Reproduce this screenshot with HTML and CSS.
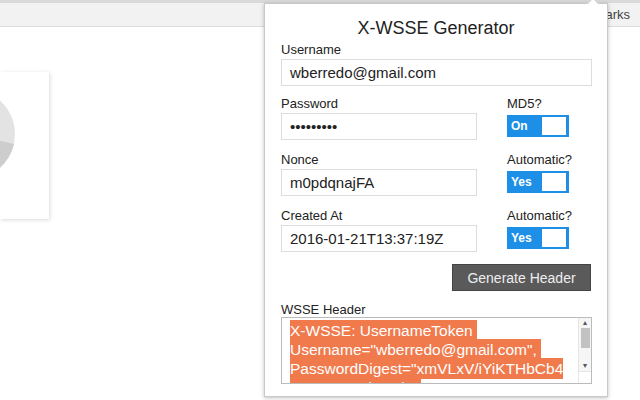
FILE: index.html
```html
<!DOCTYPE html>
<html lang="en">
<head>
    <meta charset="UTF-8">
    <meta name="viewport" content="width=device-width, initial-scale=1.0">
    <title>X-WSSE Generator</title>
    <link rel="stylesheet" href="styles.css">
</head>
<body>
    <div class="toolbar">
        <div class="toolbar_top"></div>
        <div class="toolbar_bar">
            <span class="bookmarks">Bookmarks</span>
        </div>
    </div>
    <div class="pagina">
        <div class="cartao">
            <svg class="pizza" width="49" height="147" viewBox="0 0 49 147">
                <circle cx="-30" cy="62" r="45" fill="#e3e3e3"/>
                <path d="M-30 62 L14 72 A45 45 0 0 1 -30 107 Z" fill="#cdcdcd"/>
            </svg>
        </div>
    </div>

    <div class="popup">
        <div class="popup_seta"></div>
        <h1 class="titulo">X-WSSE Generator</h1>

        <div class="campo">
            <label class="rotulo">Username</label>
            <div class="entrada entrada_larga">wberredo@gmail.com</div>
        </div>

        <div class="linha">
            <div class="campo campo_esq">
                <label class="rotulo">Password</label>
                <div class="entrada senha">&bull;&bull;&bull;&bull;&bull;&bull;&bull;&bull;&bull;</div>
            </div>
            <div class="campo campo_dir">
                <label class="rotulo">MD5?</label>
                <div class="chave"><span>On</span><div class="chave_bola"></div></div>
            </div>
        </div>

        <div class="linha">
            <div class="campo campo_esq">
                <label class="rotulo">Nonce</label>
                <div class="entrada">m0pdqnajFA</div>
            </div>
            <div class="campo campo_dir">
                <label class="rotulo">Automatic?</label>
                <div class="chave"><span>Yes</span><div class="chave_bola"></div></div>
            </div>
        </div>

        <div class="linha">
            <div class="campo campo_esq">
                <label class="rotulo">Created At</label>
                <div class="entrada">2016-01-21T13:37:19Z</div>
            </div>
            <div class="campo campo_dir">
                <label class="rotulo">Automatic?</label>
                <div class="chave"><span>Yes</span><div class="chave_bola"></div></div>
            </div>
        </div>

        <div class="acoes">
            <button class="botao">Generate Header</button>
        </div>

        <div class="campo campo_header">
            <label class="rotulo">WSSE Header</label>
            <div class="area">
                <div class="area_texto">
                    <span class="sel">X-WSSE: UsernameToken&nbsp;</span><br>
                    <span class="sel">Username="wberredo@gmail.com",&nbsp;</span><br>
                    <span class="sel">PasswordDigest="xmVLxV/iYiKTHbCb4</span><br>
                    <span class="sel">ZOUHLnGdTWdw"</span>
                </div>
                <div class="rolagem">
                    <div class="rolagem_seta">&#9652;</div>
                    <div class="rolagem_barra"></div>
                    <div class="rolagem_vazio"></div>
                    <div class="rolagem_seta">&#9662;</div>
                    <div class="rolagem_canto"></div>
                </div>
            </div>
        </div>
    </div>
</body>
</html>
```

FILE: styles.css
```css
*{
    padding: 0px;
    margin: 0px;
    box-sizing: border-box;
}
body{
    width: 640px;
    height: 400px;
    overflow: hidden;
    background-color: #fff;
    font-family: "Liberation Sans", Arial, sans-serif;
    position: relative;
}
.toolbar_top{
    height: 3px;
    background-color: #d9d9d9;
}
.toolbar_bar{
    height: 24px;
    background-color: #f2f2f2;
    border-bottom: 1px solid #dcdcdc;
    display: flex;
    justify-content: flex-end;
    align-items: center;
    overflow: hidden;
}
.bookmarks{
    font-size: 13px;
    color: #444;
    margin-right: 10px;
}
.pagina{
    padding-top: 45px;
}
.cartao{
    width: 49px;
    height: 147px;
    background-color: #fff;
    box-shadow: 1px 1px 4px rgba(0,0,0,0.15);
}
.pizza{
    display: block;
}
.popup{
    position: absolute;
    left: 264px;
    top: 3px;
    width: 344px;
    height: 394px;
    background-color: #fff;
    border: 1px solid #c8c8c8;
    box-shadow: 0px 1px 4px rgba(0,0,0,0.25);
    padding: 0px 16px 0px 16px;
}
.popup_seta{
    position: absolute;
    top: -5px;
    left: 324px;
    width: 8px;
    height: 8px;
    background-color: #fff;
    border-left: 1px solid #c8c8c8;
    border-top: 1px solid #c8c8c8;
    transform: rotate(45deg);
}
.titulo{
    text-align: center;
    font-weight: normal;
    font-size: 18px;
    color: #222;
    margin-top: 14px;
    height: 20px;
}
.campo{
    display: flex;
    flex-direction: column;
}
.rotulo{
    font-size: 13px;
    color: #222;
    height: 17px;
    margin-top: 4px;
}
.entrada{
    height: 27px;
    border: 1px solid #ddd;
    font-size: 15px;
    color: #222;
    padding: 4px 8px;
    line-height: 17px;
}
.entrada_larga{
    width: 311px;
}
.senha{
    font-size: 15px;
}
.linha{
    display: flex;
    margin-top: 6px;
}
.linha + .linha{
    margin-top: 8px;
}
.campo_esq{
    width: 196px;
}
.campo_dir{
    margin-left: 30px;
}
.chave{
    display: flex;
    align-items: center;
    justify-content: space-between;
    width: 62px;
    height: 22px;
    margin-top: 2px;
    background-color: #1e8fe6;
    padding: 2px 3px 2px 4px;
}
.chave span{
    color: #fff;
    font-weight: bold;
    font-size: 12px;
}
.chave_bola{
    width: 24px;
    height: 18px;
    background-color: #fff;
}
.acoes{
    display: flex;
    justify-content: flex-end;
    margin-top: 12px;
}
.botao{
    width: 139px;
    height: 27px;
    background-color: #5a5a5a;
    color: #eee;
    border: 1px solid #444;
    font-family: "Liberation Sans", Arial, sans-serif;
    font-size: 14px;
}
.campo_header{
    margin-top: 7px;
}
.campo_header .rotulo{
    height: 15px;
}
.area{
    width: 311px;
    height: 67px;
    border: 1px solid #bbb;
    display: flex;
    overflow: hidden;
}
.area_texto{
    flex: 1;
    padding: 3px 0px 0px 8px;
    font-size: 15.5px;
    line-height: 19px;
    color: #fff;
}
.sel{
    background-color: #f07a4c;
    padding: 2px 0px;
}
.rolagem{
    width: 13px;
    display: flex;
    flex-direction: column;
    align-items: center;
    background-color: #f6f6f6;
    border-left: 1px solid #e6e6e6;
}
.rolagem_seta{
    font-size: 8px;
    color: #555;
    height: 10px;
    line-height: 10px;
}
.rolagem_barra{
    width: 9px;
    height: 20px;
    background-color: #c2c2c2;
}
.rolagem_vazio{
    flex: 1;
}
.rolagem_canto{
    width: 12px;
    height: 12px;
    background-color: #fff;
    border-top: 1px solid #e6e6e6;
}
```
